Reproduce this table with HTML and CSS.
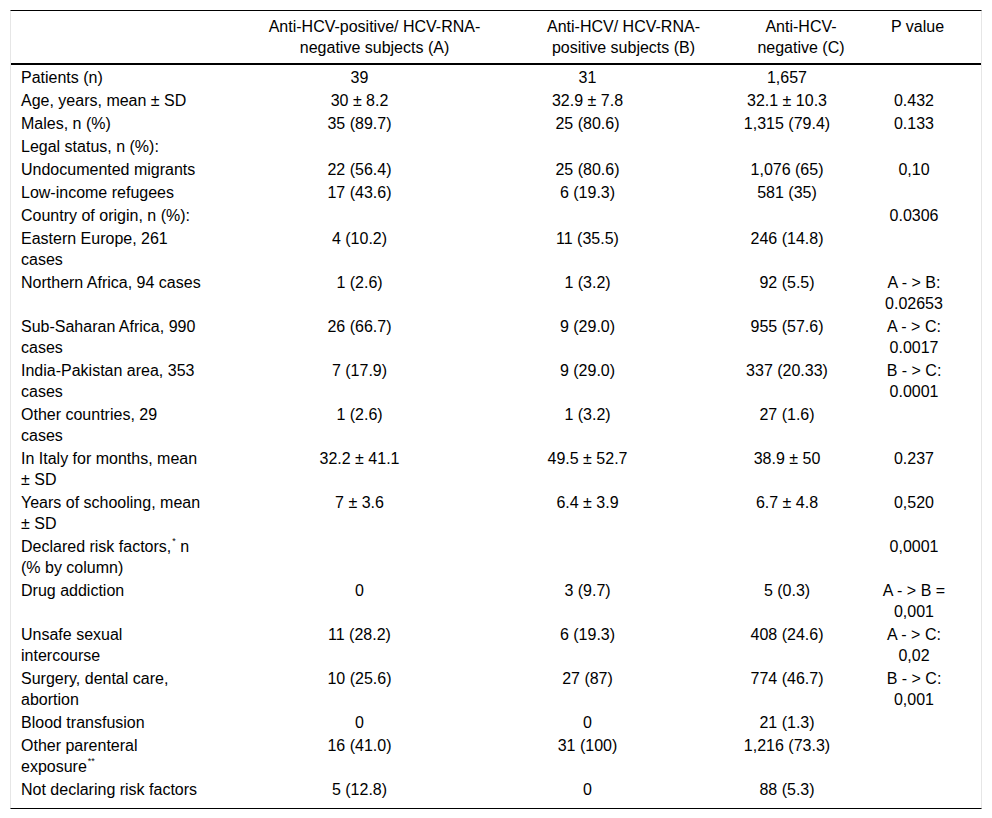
FILE: index.html
```html
<!DOCTYPE html>
<html lang="en">
<head>
<meta charset="utf-8">
<title>Table</title>
<link rel="stylesheet" href="styles.css">
</head>
<body>
<table class="data">
  <colgroup>
    <col class="w1"><col class="wa"><col class="wb"><col class="wc"><col class="wp">
  </colgroup>
  <thead>
    <tr>
      <th class="h1"></th>
      <th class="ha">Anti-HCV-positive/ HCV-RNA-negative subjects (A)</th>
      <th class="hb">Anti-HCV/ HCV-RNA-positive subjects (B)</th>
      <th class="hc">Anti-HCV-negative (C)</th>
      <th class="hp">P value</th>
    </tr>
  </thead>
  <tbody>
    <tr><td class="c1">Patients (n)</td><td class="ca">39</td><td class="cb">31</td><td class="cc">1,657</td><td class="cp"></td></tr>
    <tr><td class="c1">Age, years, mean ± SD</td><td class="ca">30 ± 8.2</td><td class="cb">32.9 ± 7.8</td><td class="cc">32.1 ± 10.3</td><td class="cp">0.432</td></tr>
    <tr><td class="c1">Males, n (%)</td><td class="ca">35 (89.7)</td><td class="cb">25 (80.6)</td><td class="cc">1,315 (79.4)</td><td class="cp">0.133</td></tr>
    <tr><td class="c1">Legal status, n (%):</td><td class="ca"></td><td class="cb"></td><td class="cc"></td><td class="cp"></td></tr>
    <tr><td class="c1">Undocumented migrants</td><td class="ca">22 (56.4)</td><td class="cb">25 (80.6)</td><td class="cc">1,076 (65)</td><td class="cp">0,10</td></tr>
    <tr><td class="c1">Low-income refugees</td><td class="ca">17 (43.6)</td><td class="cb">6 (19.3)</td><td class="cc">581 (35)</td><td class="cp"></td></tr>
    <tr><td class="c1">Country of origin, n (%):</td><td class="ca"></td><td class="cb"></td><td class="cc"></td><td class="cp">0.0306</td></tr>
    <tr><td class="c1">Eastern Europe, 261 cases</td><td class="ca">4 (10.2)</td><td class="cb">11 (35.5)</td><td class="cc">246 (14.8)</td><td class="cp"></td></tr>
    <tr><td class="c1">Northern Africa, 94 cases</td><td class="ca">1 (2.6)</td><td class="cb">1 (3.2)</td><td class="cc">92 (5.5)</td><td class="cp">A - &gt; B: 0.02653</td></tr>
    <tr><td class="c1">Sub-Saharan Africa, 990 cases</td><td class="ca">26 (66.7)</td><td class="cb">9 (29.0)</td><td class="cc">955 (57.6)</td><td class="cp">A - &gt; C: 0.0017</td></tr>
    <tr><td class="c1">India-Pakistan area, 353 cases</td><td class="ca">7 (17.9)</td><td class="cb">9 (29.0)</td><td class="cc">337 (20.33)</td><td class="cp">B - &gt; C: 0.0001</td></tr>
    <tr><td class="c1">Other countries, 29 cases</td><td class="ca">1 (2.6)</td><td class="cb">1 (3.2)</td><td class="cc">27 (1.6)</td><td class="cp"></td></tr>
    <tr><td class="c1">In Italy for months, mean ± SD</td><td class="ca">32.2 ± 41.1</td><td class="cb">49.5 ± 52.7</td><td class="cc">38.9 ± 50</td><td class="cp">0.237</td></tr>
    <tr><td class="c1">Years of schooling, mean ± SD</td><td class="ca">7 ± 3.6</td><td class="cb">6.4 ± 3.9</td><td class="cc">6.7 ± 4.8</td><td class="cp">0,520</td></tr>
    <tr><td class="c1">Declared risk factors,<sup class="fn">*</sup> n (% by column)</td><td class="ca"></td><td class="cb"></td><td class="cc"></td><td class="cp">0,0001</td></tr>
    <tr><td class="c1">Drug addiction</td><td class="ca">0</td><td class="cb">3 (9.7)</td><td class="cc">5 (0.3)</td><td class="cp">A - &gt; B = 0,001</td></tr>
    <tr><td class="c1">Unsafe sexual intercourse</td><td class="ca">11 (28.2)</td><td class="cb">6 (19.3)</td><td class="cc">408 (24.6)</td><td class="cp">A - &gt; C: 0,02</td></tr>
    <tr><td class="c1">Surgery, dental care, abortion</td><td class="ca">10 (25.6)</td><td class="cb">27 (87)</td><td class="cc">774 (46.7)</td><td class="cp">B - &gt; C: 0,001</td></tr>
    <tr><td class="c1">Blood transfusion</td><td class="ca">0</td><td class="cb">0</td><td class="cc">21 (1.3)</td><td class="cp"></td></tr>
    <tr><td class="c1">Other parenteral exposure<sup class="fn">**</sup></td><td class="ca">16 (41.0)</td><td class="cb">31 (100)</td><td class="cc">1,216 (73.3)</td><td class="cp"></td></tr>
    <tr class="last"><td class="c1">Not declaring risk factors</td><td class="ca">5 (12.8)</td><td class="cb">0</td><td class="cc">88 (5.3)</td><td class="cp"></td></tr>
  </tbody>
</table>
</body>
</html>
```

FILE: styles.css
```css
html, body {
  margin: 0;
  background: #ffffff;
}

body {
  padding: 10px;
  font-family: "Liberation Sans", Arial, sans-serif;
  font-size: 16px;
  line-height: 21px;
  color: #000;
}

.data {
  width: 972px;
  table-layout: fixed;
  border-collapse: separate;
  border-spacing: 0;
  border-left: 1px solid #e6e6e6;
  border-right: 1px solid #e6e6e6;
  border-top: 1px solid #000;
  border-bottom: 1px solid #000;
}

.w1 { width: 201px; }
.wa { width: 313px; }
.wb { width: 195px; }
.wc { width: 142px; }
.wp { width: 119px; }

.data th {
  font-weight: normal;
  text-align: center;
  vertical-align: top;
  padding-top: 5px;
  padding-bottom: 5px;
  border-bottom: 2px solid #000;
}

.h1 { padding-left: 10px; padding-right: 10px; }
.ha { padding-left: 37px; padding-right: 25px; }
.hb { padding-left: 12px; padding-right: 10px; }
.hc { padding-left: 24px; padding-right: 4px; }
.hp { padding-left: 0; padding-right: 8px; }

.data td {
  vertical-align: top;
  text-align: center;
  padding-top: 2px;
  padding-bottom: 0;
}

.data td.c1 {
  text-align: left;
  padding-left: 10px;
  padding-right: 10px;
}

.data td.ca { padding-left: 0; padding-right: 18px; }
.data td.cb { padding-left: 0; padding-right: 70px; }
.data td.cc { padding-left: 0; padding-right: 8px; }
.data td.cp { padding-left: 12px; padding-right: 27px; }

.data tr.last td { padding-bottom: 8px; }

.fn {
  display: inline-block;
  font-size: 9px;
  line-height: 9px;
  vertical-align: top;
  margin-left: 1px;
  margin-top: 1px;
}
```
